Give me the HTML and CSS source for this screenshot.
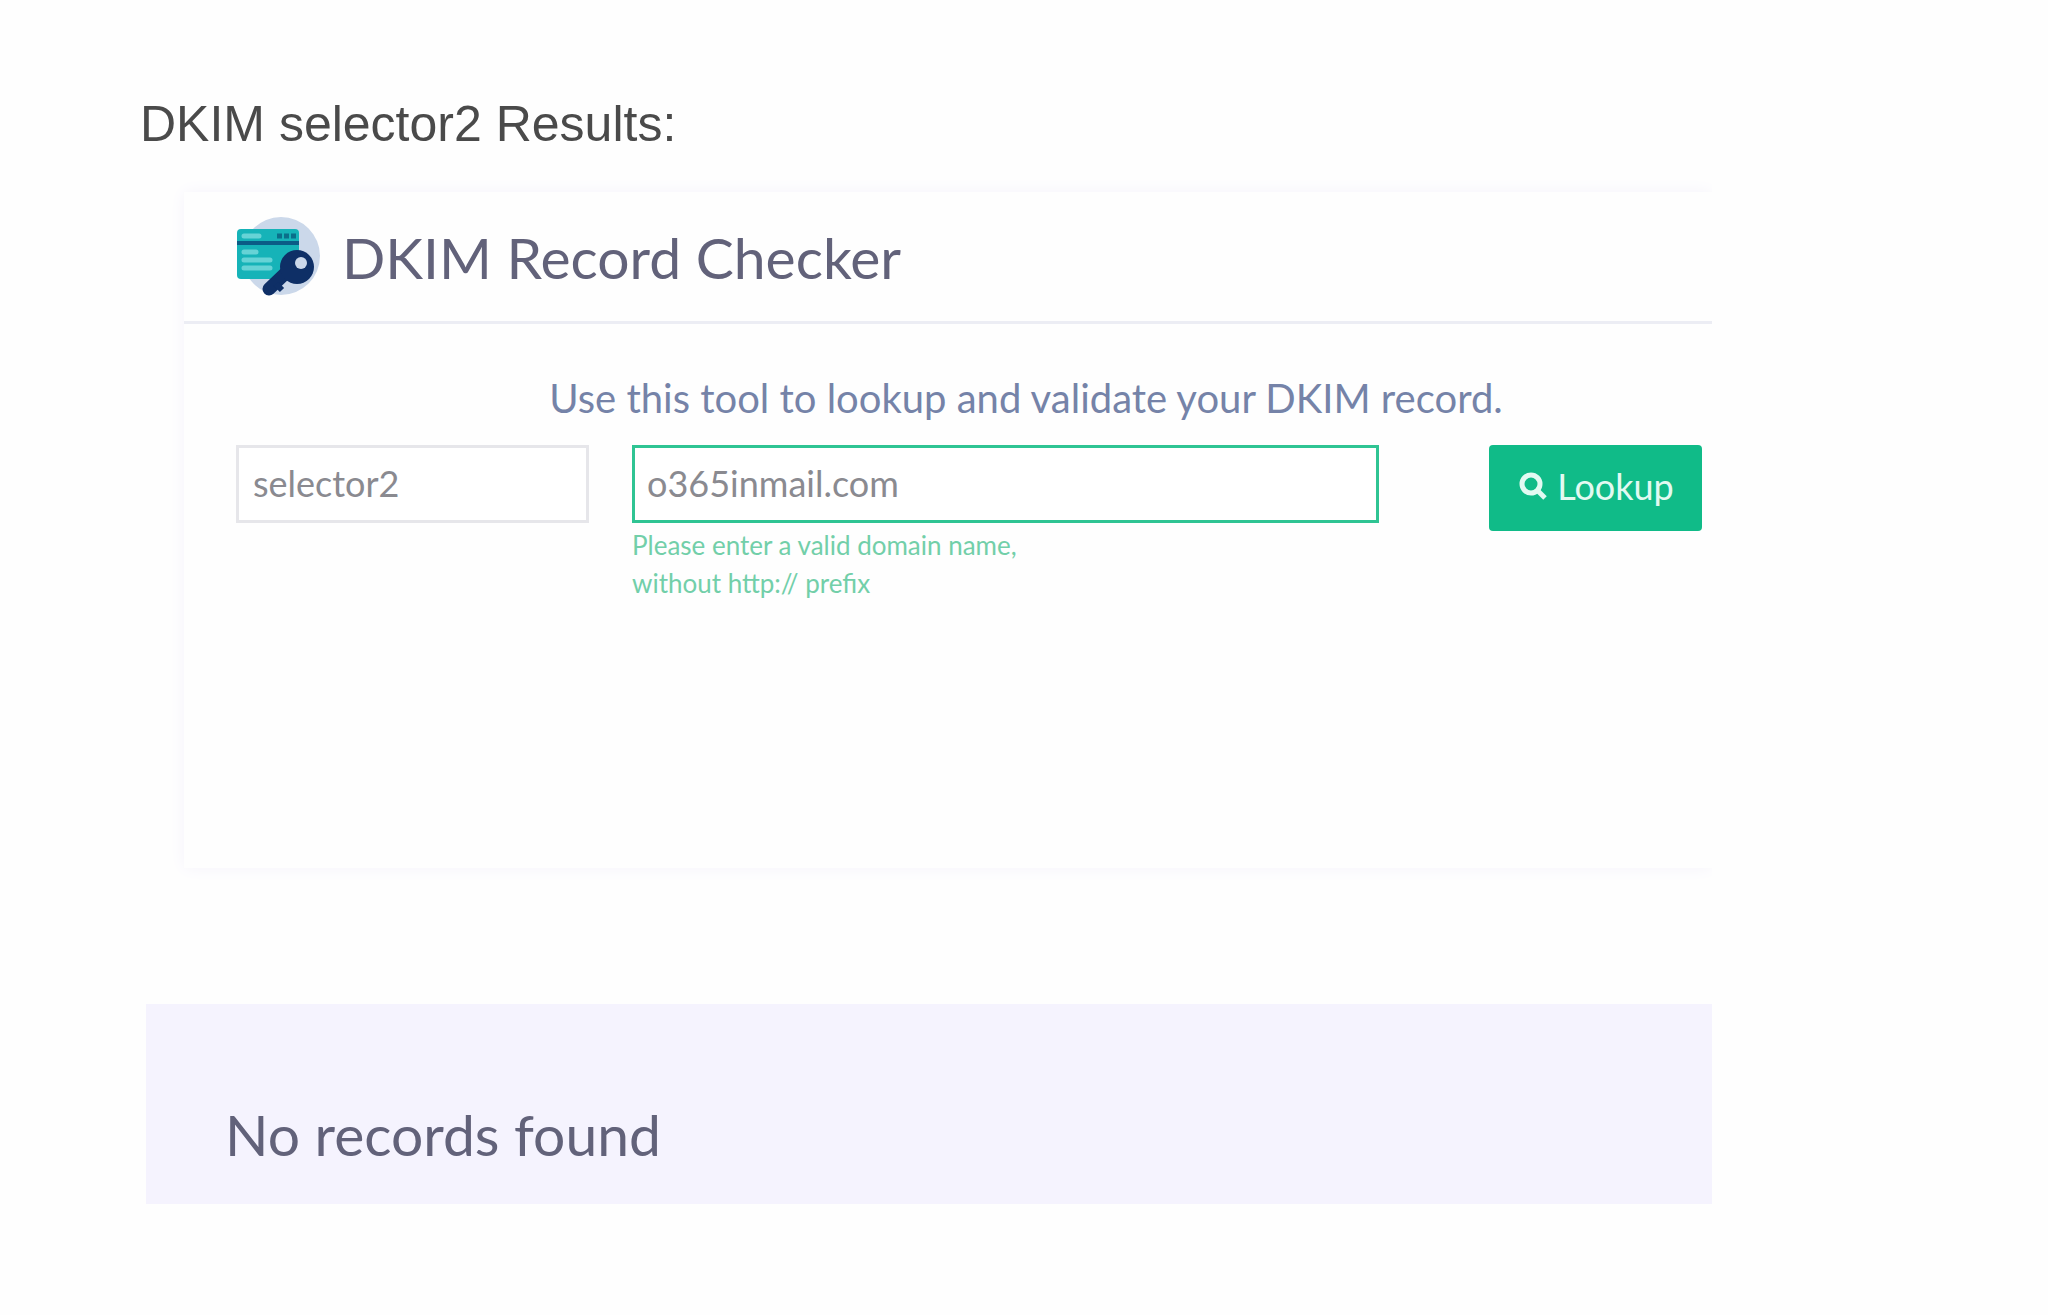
FILE: index.html
```html
<!DOCTYPE html>
<html lang="en">
<head>
    <meta charset="UTF-8">
    <title>DKIM Record Checker</title>
    <link rel="stylesheet" href="styles.css">
</head>
<body>
    <h1>DKIM selector2 Results:</h1>

    <main class="results">
        <!-- Checker card -->
        <section class="card">
            <header class="card-header">
                <svg class="logo" viewBox="0 0 88 80" aria-hidden="true">
                    <circle cx="45" cy="39" r="39" fill="#cbd8ea"/>
                    <rect x="1" y="12" width="62" height="50" rx="4" fill="#16b3b8"/>
                    <path d="M1 26h62" stroke="#0b5c86" stroke-width="4"/>
                    <path d="M8 19h15M8 35h12M8 43h26M8 51h26" stroke="#66d3d6" stroke-width="5" stroke-linecap="round"/>
                    <path d="M41 19h5M48 19h5M55 19h5" stroke="#0b6f8a" stroke-width="5"/>
                    <path d="M56 50L33 72" stroke="#0e2f66" stroke-width="13" stroke-linecap="round"/>
                    <path d="M40 67l6 6" stroke="#0e2f66" stroke-width="6"/>
                    <circle cx="61" cy="50" r="17" fill="#0e2f66"/>
                    <circle cx="65" cy="46" r="6" fill="#cbd8ea"/>
                </svg>
                <h2>DKIM Record Checker</h2>
            </header>

            <p class="intro">Use this tool to lookup and validate your DKIM record.</p>

            <form class="lookup-form">
                <input type="text" id="selector" aria-label="Selector" value="selector2">
                <div class="domain-group">
                    <input type="text" id="domain" class="valid" aria-label="Domain" aria-describedby="domainHelp" value="o365inmail.com">
                    <small id="domainHelp">Please enter a valid domain name,<br>without http:// prefix</small>
                </div>
                <button type="button">
                    <svg class="search-icon" viewBox="0 0 28 28" aria-hidden="true">
                        <circle cx="12" cy="12" r="9" fill="none" stroke="currentColor" stroke-width="5"/>
                        <path d="M18 18l8 8" stroke="currentColor" stroke-width="5"/>
                    </svg>
                    Lookup
                </button>
            </form>
        </section>

        <!-- Lookup result -->
        <section class="records">
            <h2>No records found</h2>
        </section>
    </main>
</body>
</html>
```
FILE: styles.css
```css
* {
    box-sizing: border-box;
}
body {
    margin: 0;
    padding: 92px 336px 110px 140px;
    background-color: #fefefe;
    font-family: Lato, sans-serif;
}
h1, h2, p {
    margin: 0;
    font-weight: normal;
}
h1 {
    color: #4a4a4a;
    font-family: "Liberation Sans", Arial, sans-serif;
    font-size: 50px;
    line-height: 64px;
}
h2 {
    color: #62627a;
    font-size: 57px;
    line-height: 72px;
}
.results {
    margin-left: 6px;
    padding-top: 36px;
    overflow: hidden;
}
.card {
    min-height: 676px;
    margin-left: 38px;
    box-shadow: 0 0 16px #f6f4fc;
}
.card-header {
    display: flex;
    align-items: center;
    gap: 18px;
    height: 132px;
    padding-left: 52px;
    border-bottom: 3px solid #ecedf4;
}
.logo {
    width: 88px;
    height: 80px;
}
.intro {
    padding: 47px 0 20px 156px;
    color: #7583a8;
    font-size: 40px;
    line-height: 54px;
    text-align: center;
}
.lookup-form {
    display: grid;
    grid-template-columns: 353fr 747fr auto;
    column-gap: 43px;
    align-items: start;
    padding: 0 10px 0 52px;
}
input {
    width: 100%;
    height: 78px;
    padding: 0 14px 2px;
    border: 3px solid #e6e6ea;
    background-color: white;
    color: #8a8a90;
    font-family: inherit;
    font-size: 36px;
}
input.valid {
    padding-left: 12px;
    border-color: #2fc493;
}
small {
    display: block;
    padding-top: 3px;
    color: #72cfa9;
    font-size: 26px;
    line-height: 38px;
}
button {
    display: flex;
    align-items: center;
    justify-content: center;
    gap: 10px;
    width: 213px;
    height: 86px;
    margin-left: 67px;
    padding: 0 0 4px 2px;
    border: none;
    border-radius: 4px;
    background-color: #10bb88;
    color: #e2faf2;
    font-family: inherit;
    font-size: 36px;
    cursor: pointer;
}
.search-icon {
    width: 28px;
    height: 28px;
}
.records {
    margin-top: 136px;
    padding: 94px 79px 34px;
    background-color: #f5f3fe;
}
```
